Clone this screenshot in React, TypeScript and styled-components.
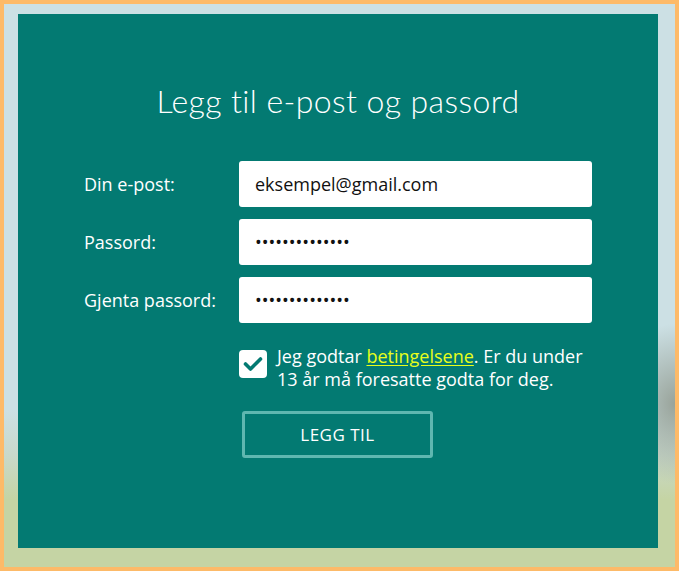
import styled, { createGlobalStyle } from 'styled-components'

const GlobalStyle = createGlobalStyle`
    html, body {
        margin: 0;
        padding: 0;
    }
    body {
        font-family: 'Open Sans', 'Liberation Sans', sans-serif;
    }
`

const Frame = styled.div`
    box-sizing: border-box;
    width: 679px;
    height: 571px;
    border: 4px solid #fdba68;
    padding: 10px 17px 19px 14px;
    background:
        radial-gradient(ellipse 60px 80px at 100% 71%, rgba(150, 160, 150, 0.95), rgba(150, 160, 150, 0) 100%),
        linear-gradient(to bottom, #cce0e4 0%, #cce0e4 72%, #c9d9cb 80%, #c5d4a4 88%, #c5d4a4 100%);
`

const Panel = styled.main`
    box-sizing: border-box;
    height: 100%;
    background: #037a72;
    display: flex;
    flex-direction: column;
    align-items: center;
    padding-top: 68px;
    color: #fff;
`

const Title = styled.h1`
    margin: 0 0 41px;
    font-family: 'Lato', sans-serif;
    font-weight: 300;
    font-size: 32px;
    line-height: 38px;
    letter-spacing: 0.4px;
    color: #fff;
`

const Form = styled.form`
    width: 508px;
    display: grid;
    grid-template-columns: 155px 353px;
    row-gap: 12px;
    align-items: center;
`

const Label = styled.label`
    font-size: 18px;
    color: #fff;
`

const Field = styled.input`
    box-sizing: border-box;
    height: 46px;
    width: 100%;
    border: none;
    border-radius: 3px;
    padding: 0 16px;
    font-family: 'Open Sans', sans-serif;
    font-size: 18px;
    color: #111;
    outline: none;
    background: #fff;
`

const Terms = styled.div`
    grid-column: 2;
    display: flex;
    align-items: flex-start;
    gap: 10px;
    margin-top: 10px;
    font-size: 18px;
    line-height: 23px;
`

const Box = styled.span`
    flex: none;
    width: 28px;
    height: 28px;
    margin-top: 5px;
    border-radius: 4px;
    background: #fff;
    display: flex;
    align-items: center;
    justify-content: center;
`

const TermsText = styled.span`
    flex: 1;
`

const Link = styled.a`
    color: #e8ff1a;
    text-decoration: underline;
    text-underline-offset: 2px;
`

const Submit = styled.button`
    grid-column: 2;
    justify-self: start;
    margin: 8px 0 0 3px;
    box-sizing: border-box;
    width: 191px;
    height: 47px;
    background: transparent;
    border: 3px solid #5fb7b0;
    border-radius: 3px;
    color: #fff;
    font-family: 'Open Sans', sans-serif;
    font-size: 17px;
    letter-spacing: 0.5px;
    text-transform: uppercase;
    cursor: pointer;
`

export default function App() {
    return (
        <>
            <GlobalStyle />
            <Frame>
                <Panel>
                    <Title>Legg til e-post og passord</Title>
                    <Form onSubmit={(e) => e.preventDefault()}>
                        <Label htmlFor="email">Din e-post:</Label>
                        <Field id="email" type="text" defaultValue="eksempel@gmail.com" />
                        <Label htmlFor="pw">Passord:</Label>
                        <Field id="pw" type="password" defaultValue="12345678901234" />
                        <Label htmlFor="pw2">Gjenta passord:</Label>
                        <Field id="pw2" type="password" defaultValue="12345678901234" />
                        <Terms>
                            <Box>
                                <svg width="20" height="14" viewBox="0 0 20 14">
                                    <path d="M2.5 7l5 5L17.5 2" fill="none" stroke="#037a72" strokeWidth="3.6" strokeLinecap="round" strokeLinejoin="round" />
                                </svg>
                            </Box>
                            <TermsText>
                                Jeg godtar <Link href="#">betingelsene</Link>. Er du under 13 år må foresatte godta for deg.
                            </TermsText>
                        </Terms>
                        <Submit type="submit">Legg til</Submit>
                    </Form>
                </Panel>
            </Frame>
        </>
    )
}
